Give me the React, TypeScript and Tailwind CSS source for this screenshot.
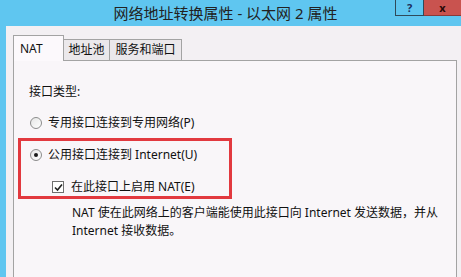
import React from "react";

const font = { fontFamily: '"Noto Sans", "Noto Sans CJK SC", sans-serif' };

function Radio({ checked }: { checked?: boolean }) {
  return (
    <span className="relative flex h-[12px] w-[12px] shrink-0 items-center justify-center rounded-full border border-[#8c8c8c] bg-gradient-to-br from-[#e6e6e6] to-[#ffffff]">
      {checked && <span className="h-[4px] w-[4px] rounded-full bg-[#1a1a1a]" />}
    </span>
  );
}

function Checkbox() {
  return (
    <span className="flex h-[12px] w-[12px] shrink-0 items-center justify-center border border-[#6f6f6f] bg-white">
      <svg width="9" height="9" viewBox="0 0 9 9">
        <path d="M1 4.5 L3.5 7 L8 1.5" fill="none" stroke="#222" strokeWidth="1.6" />
      </svg>
    </span>
  );
}

export default function App() {
  return (
    <div className="relative h-[277px] w-[461px] overflow-hidden bg-[#5fc6f0] text-[12px] text-[#111]" style={font}>
      {/* title bar */}
      <div className="flex h-[26px] items-center justify-center pr-[10px] text-[15px] text-[#222]">
        网络地址转换属性 - 以太网 2 属性
      </div>
      <div className="absolute right-0 top-0 flex h-[16px]">
        <div className="flex w-[29px] items-center justify-center border-b border-l border-r border-[#2f4a5a] text-[11px] font-bold leading-[14px] text-[#1d2e5c]">
          <span className="block h-[14px] leading-[14px]">?</span>
        </div>
        <div className="flex w-[37px] items-center justify-center border-b border-[#8a3a38] bg-[#c9534f] text-[11px] font-bold leading-[14px] text-[#2a0a08]">
          <span className="block h-[14px] leading-[13px]">x</span>
        </div>
      </div>

      {/* body */}
      <div className="ml-[6px] flex h-[251px] flex-col bg-[#f3f0f3] pl-[7px] pr-[4px] pt-[9px]">
        {/* tabs */}
        <div className="relative z-10 flex h-[25px] items-end">
          <div className="-mb-px flex h-[26px] w-[51px] items-start border-l border-r border-t border-[#a3a3a3] bg-[#fcf9fc] pl-[6px] pt-[5px] leading-[16px]">
            NAT
          </div>
          <div className="flex h-[21px] w-[46px] items-center justify-center border-r border-t border-[#a3a3a3] bg-[#ebe8eb] leading-[16px]">
            地址池
          </div>
          <div className="flex h-[21px] w-[72px] items-center justify-center border-r border-t border-[#a3a3a3] bg-[#ebe8eb] leading-[16px]">
            服务和端口
          </div>
        </div>

        {/* panel */}
        <div className="flex flex-1 flex-col border-l border-r border-t border-[#a3a3a3] bg-[#f9f6f9] pl-[4px] pt-[22px]">
          <div className="ml-[11px] h-[18px] leading-[18px]">接口类型:</div>

          <div className="ml-[12px] mt-[13px] flex h-[18px] items-center gap-[6px] leading-[18px]">
            <Radio />
            <span>专用接口连接到专用网络(P)</span>
          </div>

          <div className="mt-[6px] flex w-[214px] flex-col border-[3px] border-[#e2393f] pt-[5px]">
            <div className="ml-[9px] flex h-[18px] items-center gap-[6px] leading-[18px]">
              <Radio checked />
              <span>公用接口连接到 Internet(U)</span>
            </div>
            <div className="ml-[31px] mt-[14px] flex h-[18px] items-center gap-[7px] leading-[18px]">
              <Checkbox />
              <span>在此接口上启用 NAT(E)</span>
            </div>
          </div>

          <div className="ml-[54px] mt-[5px] leading-[18px]">
            <div>NAT 使在此网络上的客户端能使用此接口向 Internet 发送数据，并从</div>
            <div>Internet 接收数据。</div>
          </div>
        </div>
      </div>
    </div>
  );
}
